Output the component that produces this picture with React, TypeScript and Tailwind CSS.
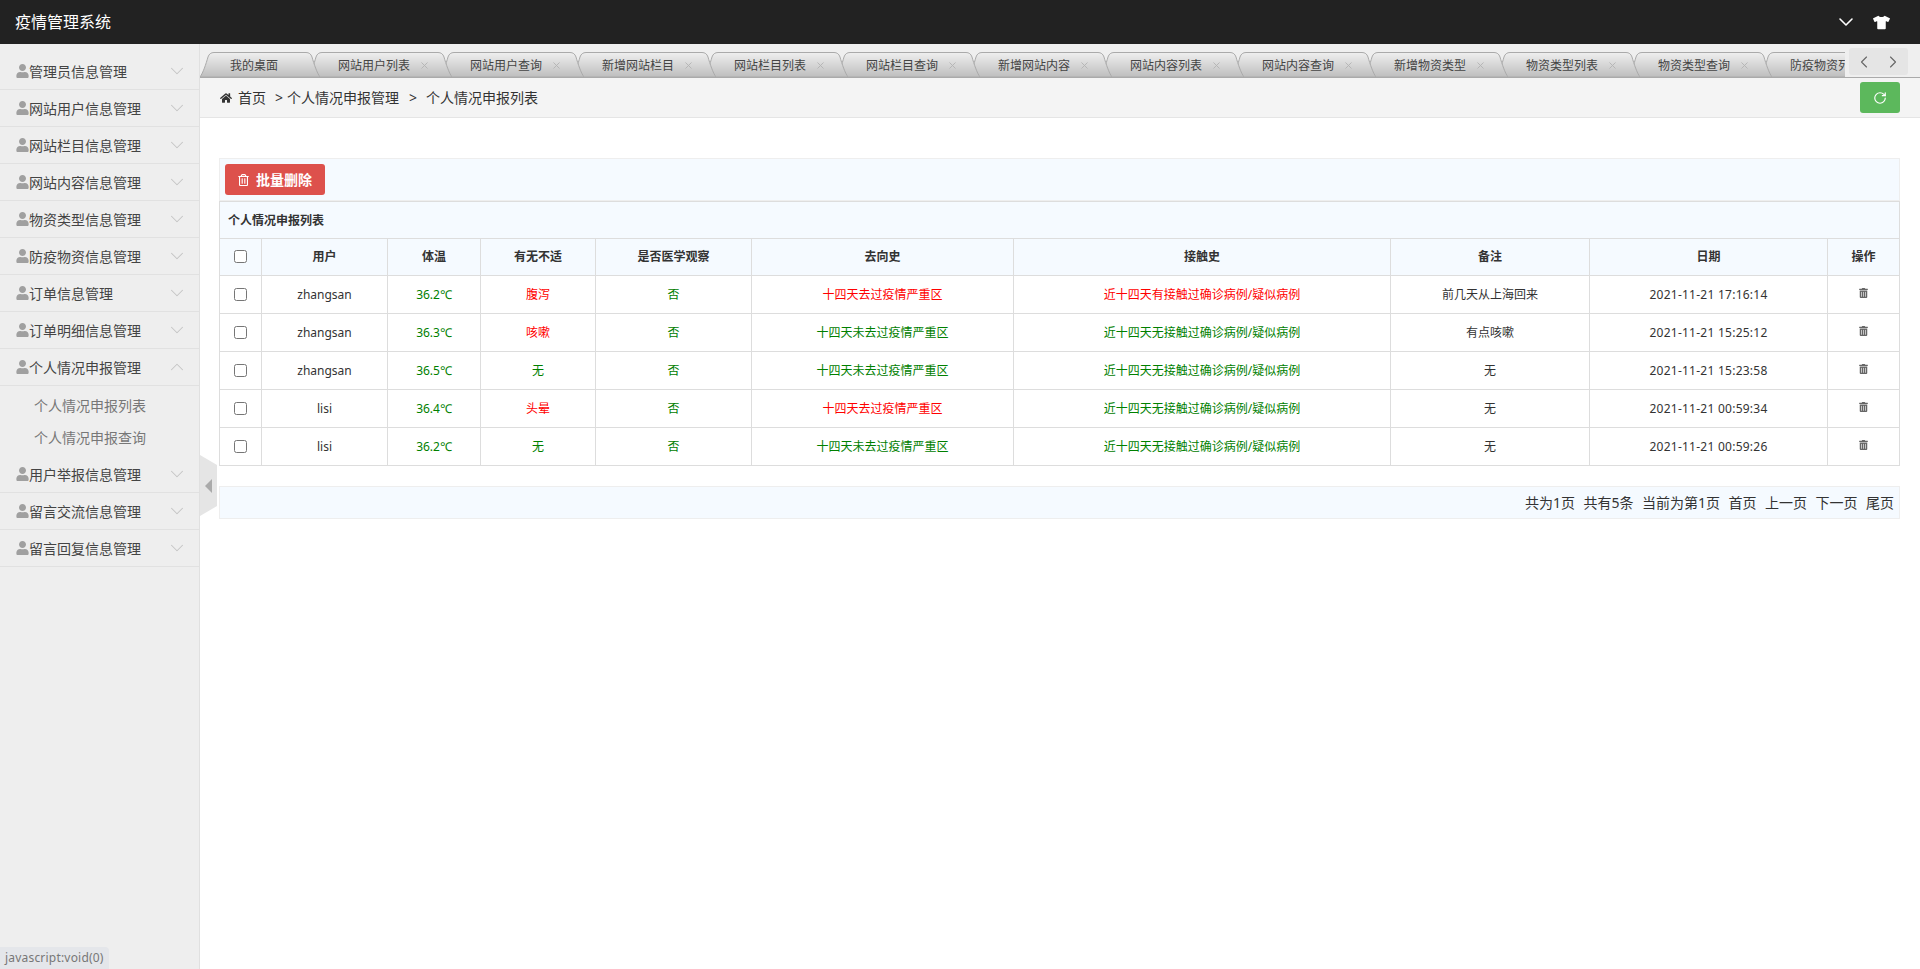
import React from "react";
import { ChevronDown, ChevronUp, ChevronLeft, ChevronRight, RotateCw, X } from "lucide-react";
import { FaHome, FaTshirt, FaUser, FaTrashAlt, FaRegTrashAlt } from "react-icons/fa";

const menus = [
  "管理员信息管理",
  "网站用户信息管理",
  "网站栏目信息管理",
  "网站内容信息管理",
  "物资类型信息管理",
  "防疫物资信息管理",
  "订单信息管理",
  "订单明细信息管理",
  "个人情况申报管理",
  "用户举报信息管理",
  "留言交流信息管理",
  "留言回复信息管理",
];

const tabs = [
  "我的桌面",
  "网站用户列表",
  "网站用户查询",
  "新增网站栏目",
  "网站栏目列表",
  "网站栏目查询",
  "新增网站内容",
  "网站内容列表",
  "网站内容查询",
  "新增物资类型",
  "物资类型列表",
  "物资类型查询",
  "防疫物资列表",
];

const headers = ["用户", "体温", "有无不适", "是否医学观察", "去向史", "接触史", "备注", "日期", "操作"];

const rows = [
  { user: "zhangsan", temp: "36.2℃", sick: "腹泻", go: "十四天去过疫情严重区", touch: "近十四天有接触过确诊病例/疑似病例", note: "前几天从上海回来", date: "2021-11-21 17:16:14" },
  { user: "zhangsan", temp: "36.3℃", sick: "咳嗽", go: "十四天未去过疫情严重区", touch: "近十四天无接触过确诊病例/疑似病例", note: "有点咳嗽", date: "2021-11-21 15:25:12" },
  { user: "zhangsan", temp: "36.5℃", sick: "无", go: "十四天未去过疫情严重区", touch: "近十四天无接触过确诊病例/疑似病例", note: "无", date: "2021-11-21 15:23:58" },
  { user: "lisi", temp: "36.4℃", sick: "头晕", go: "十四天去过疫情严重区", touch: "近十四天无接触过确诊病例/疑似病例", note: "无", date: "2021-11-21 00:59:34" },
  { user: "lisi", temp: "36.2℃", sick: "无", go: "十四天未去过疫情严重区", touch: "近十四天无接触过确诊病例/疑似病例", note: "无", date: "2021-11-21 00:59:26" },
];

const SideItem = ({ label, open }: { label: string; open?: boolean }) => (
  <div className="flex h-[37px] items-center border-b border-[#e1e1e1] pl-[16px] pr-[11px] text-sm text-[#444]">
    <FaUser className="h-[14px] w-[13px] shrink-0 text-[#a0a0a0]" />
    <span className="flex-1 pt-[2px]">{label}</span>
    {open ? (
      <ChevronUp className="h-[22px] w-[22px] text-[#c4c4c4]" strokeWidth={1.1} />
    ) : (
      <ChevronDown className="h-[22px] w-[22px] text-[#c4c4c4]" strokeWidth={1.1} />
    )}
  </div>
);

// tab outline, the slanted sides are part of the drawing
const Tab = ({ label, index }: { label: string; index: number }) => {
  const w = index === 0 ? 120 : 144;
  const id = `tabfill${index}`;
  return (
    <div
      className="relative -mr-[12px] flex h-[25px] shrink-0 items-center pl-[30px] pt-[2px] text-xs text-[#444]"
      style={{ width: w, zIndex: 20 - index }}
    >
      <svg className="absolute left-0 top-0 h-[25px]" width={w} height={25} viewBox={`0 0 ${w} 25`}>
        <defs>
          <linearGradient id={id} x1="0" y1="0" x2="0" y2="1">
            <stop offset="0" stopColor="#efefef" />
            <stop offset="1" stopColor="#bebebe" />
          </linearGradient>
        </defs>
        <path
          d={`M0 25 C3 21 6 12 8 5 C9 2 11 0.5 14 0.5 L${w - 14} 0.5 C${w - 11} 0.5 ${w - 9} 2 ${w - 8} 5 C${w - 6} 12 ${w - 3} 21 ${w} 25 Z`}
          fill={`url(#${id})`}
          stroke="#aaa"
        />
      </svg>
      <span className="relative">{label}</span>
      {index > 0 && <X className="absolute left-[111px] top-[8px] h-[11px] w-[11px] text-[#b4b4b4]" strokeWidth={2} />}
    </div>
  );
};

export default function App() {
  return (
    <div className="relative flex h-screen flex-col overflow-hidden bg-white font-['Noto_Sans','Noto_Sans_CJK_SC',sans-serif] text-[#333]">
      {/* top bar */}
      <header className="flex h-[44px] shrink-0 items-center justify-between bg-[#222] pl-[15px] pr-[30px] text-white">
        <span className="text-base">疫情管理系统</span>
        <div className="flex items-center gap-[15px]">
          <ChevronDown className="h-[24px] w-[24px]" strokeWidth={1.6} />
          <FaTshirt className="h-[15px] w-[17px]" />
        </div>
      </header>

      <div className="flex min-h-0 flex-1">
        {/* sidebar */}
        <aside className="w-[200px] shrink-0 border-r border-[#e0e0e0] bg-[#eee] pt-[9px]">
          {menus.map((m) => (
            <React.Fragment key={m}>
              <SideItem label={m} open={m === "个人情况申报管理"} />
              {m === "个人情况申报管理" && (
                <div className="pl-[34px] pt-[4px] pb-[2px] text-sm text-[#777]">
                  <div className="flex h-[32px] items-center">个人情况申报列表</div>
                  <div className="flex h-[32px] items-center">个人情况申报查询</div>
                </div>
              )}
            </React.Fragment>
          ))}
        </aside>

        <main className="min-w-0 flex-1">
          {/* tab strip */}
          <div className="relative h-[34px] border-b border-[#aaa] bg-[#efefef] pt-[8px]">
            <div className="flex w-[1645px] overflow-hidden">
              {tabs.map((t, i) => (
                <Tab key={t} label={t} index={i} />
              ))}
            </div>
            <div className="absolute left-[1649px] top-[4px] flex h-[27px] w-[59px] items-center justify-around rounded-[3px] bg-[#e5e5e5] text-[#666]">
              <ChevronLeft className="h-[20px] w-[20px]" strokeWidth={1.3} />
              <ChevronRight className="h-[20px] w-[20px]" strokeWidth={1.3} />
            </div>
          </div>

          {/* breadcrumb */}
          <div className="flex h-[40px] items-center justify-between border-b border-[#e5e5e5] bg-[#f4f4f4] pl-[20px] pr-[20px] text-sm text-[#333]">
            <div className="flex items-center">
              <FaHome className="mr-[6px] h-[12px] w-[12px]" />
              <span>首页</span>
              <span className="ml-[9px] mr-[4px]">&gt;</span>
              <span>个人情况申报管理</span>
              <span className="ml-[10px] mr-[9px]">&gt;</span>
              <span>个人情况申报列表</span>
            </div>
            <button className="flex h-[31px] w-[40px] items-center justify-center rounded-[3px] bg-[#5cb85c] text-white">
              <RotateCw className="h-[14px] w-[14px]" strokeWidth={2} />
            </button>
          </div>

          <div className="pl-[19px] pr-[20px] pt-[40px]">
            <div className="flex h-[43px] items-center border border-[#eee] bg-[#f5faff] pl-[5px]">
              <button className="flex h-[31px] w-[100px] items-center justify-center gap-[7px] rounded-[3px] bg-[#dd514c] text-sm font-bold text-white">
                <FaRegTrashAlt className="h-[12px] w-[11px]" />
                批量删除
              </button>
            </div>

            <div className="flex h-[37px] items-center border-x border-t border-[#ddd] bg-[#f5faff] pl-[8px] pt-[2px] text-xs font-bold text-[#333]">
              个人情况申报列表
            </div>

            <table className="w-full table-fixed border-collapse text-center text-xs">
              <colgroup>
                <col className="w-[42px]" />
                <col className="w-[126px]" />
                <col className="w-[93px]" />
                <col className="w-[115px]" />
                <col className="w-[156px]" />
                <col className="w-[262px]" />
                <col className="w-[377px]" />
                <col className="w-[199px]" />
                <col className="w-[238px]" />
                <col />
              </colgroup>
              <thead>
                <tr className="h-[37px] bg-[#f5faff] font-bold">
                  <th className="border border-[#ddd]">
                    <input type="checkbox" className="-mt-[2px] align-middle" />
                  </th>
                  {headers.map((h) => (
                    <th key={h} className="border border-[#ddd] font-bold text-[#333]">
                      {h}
                    </th>
                  ))}
                </tr>
              </thead>
              <tbody>
                {rows.map((r) => (
                  <tr key={r.date} className="h-[38px]">
                    <td className="border border-[#ddd]">
                      <input type="checkbox" className="-mt-[2px] align-middle" />
                    </td>
                    <td className="border border-[#ddd]">{r.user}</td>
                    <td className="border border-[#ddd] text-[#008000]">{r.temp}</td>
                    <td className={`border border-[#ddd] ${r.sick === "无" ? "text-[#008000]" : "text-[#ff0000]"}`}>{r.sick}</td>
                    <td className="border border-[#ddd] text-[#008000]">否</td>
                    <td className={`border border-[#ddd] ${r.go.includes("未") ? "text-[#008000]" : "text-[#ff0000]"}`}>{r.go}</td>
                    <td className={`border border-[#ddd] ${r.touch.includes("无") ? "text-[#008000]" : "text-[#ff0000]"}`}>{r.touch}</td>
                    <td className="border border-[#ddd]">{r.note}</td>
                    <td className="border border-[#ddd] tracking-[0.25px]">{r.date}</td>
                    <td className="border border-[#ddd]">
                      <FaTrashAlt className="mx-auto -mt-[3px] h-[10px] w-[9px] text-[#666]" />
                    </td>
                  </tr>
                ))}
              </tbody>
            </table>

            <div className="mt-[20px] flex h-[33px] items-center justify-end gap-[8.5px] border border-[#eee] bg-[#f5faff] pr-[5px] text-sm text-[#333]">
              <span>共为1页</span>
              <span>共有5条</span>
              <span>当前为第1页</span>
              <span>首页</span>
              <span>上一页</span>
              <span>下一页</span>
              <span>尾页</span>
            </div>
          </div>
        </main>
      </div>

      {/* sidebar collapse handle */}
      <svg className="absolute left-[200px] top-[455px]" width="17" height="61" viewBox="0 0 17 61">
        <path d="M0 0 L17 10 L17 51 L0 61 Z" fill="#e5e5e5" />
        <path d="M5 31 L12 24 L12 38 Z" fill="#aaa" />
      </svg>

      {/* browser status bubble */}
      <div className="absolute bottom-0 left-0 flex h-[22px] w-[109px] items-center rounded-tr-[4px] bg-[#e4e6ea] pl-[5px] text-xs tracking-[0.2px] text-[#777]">
        javascript:void(0)
      </div>
    </div>
  );
}
